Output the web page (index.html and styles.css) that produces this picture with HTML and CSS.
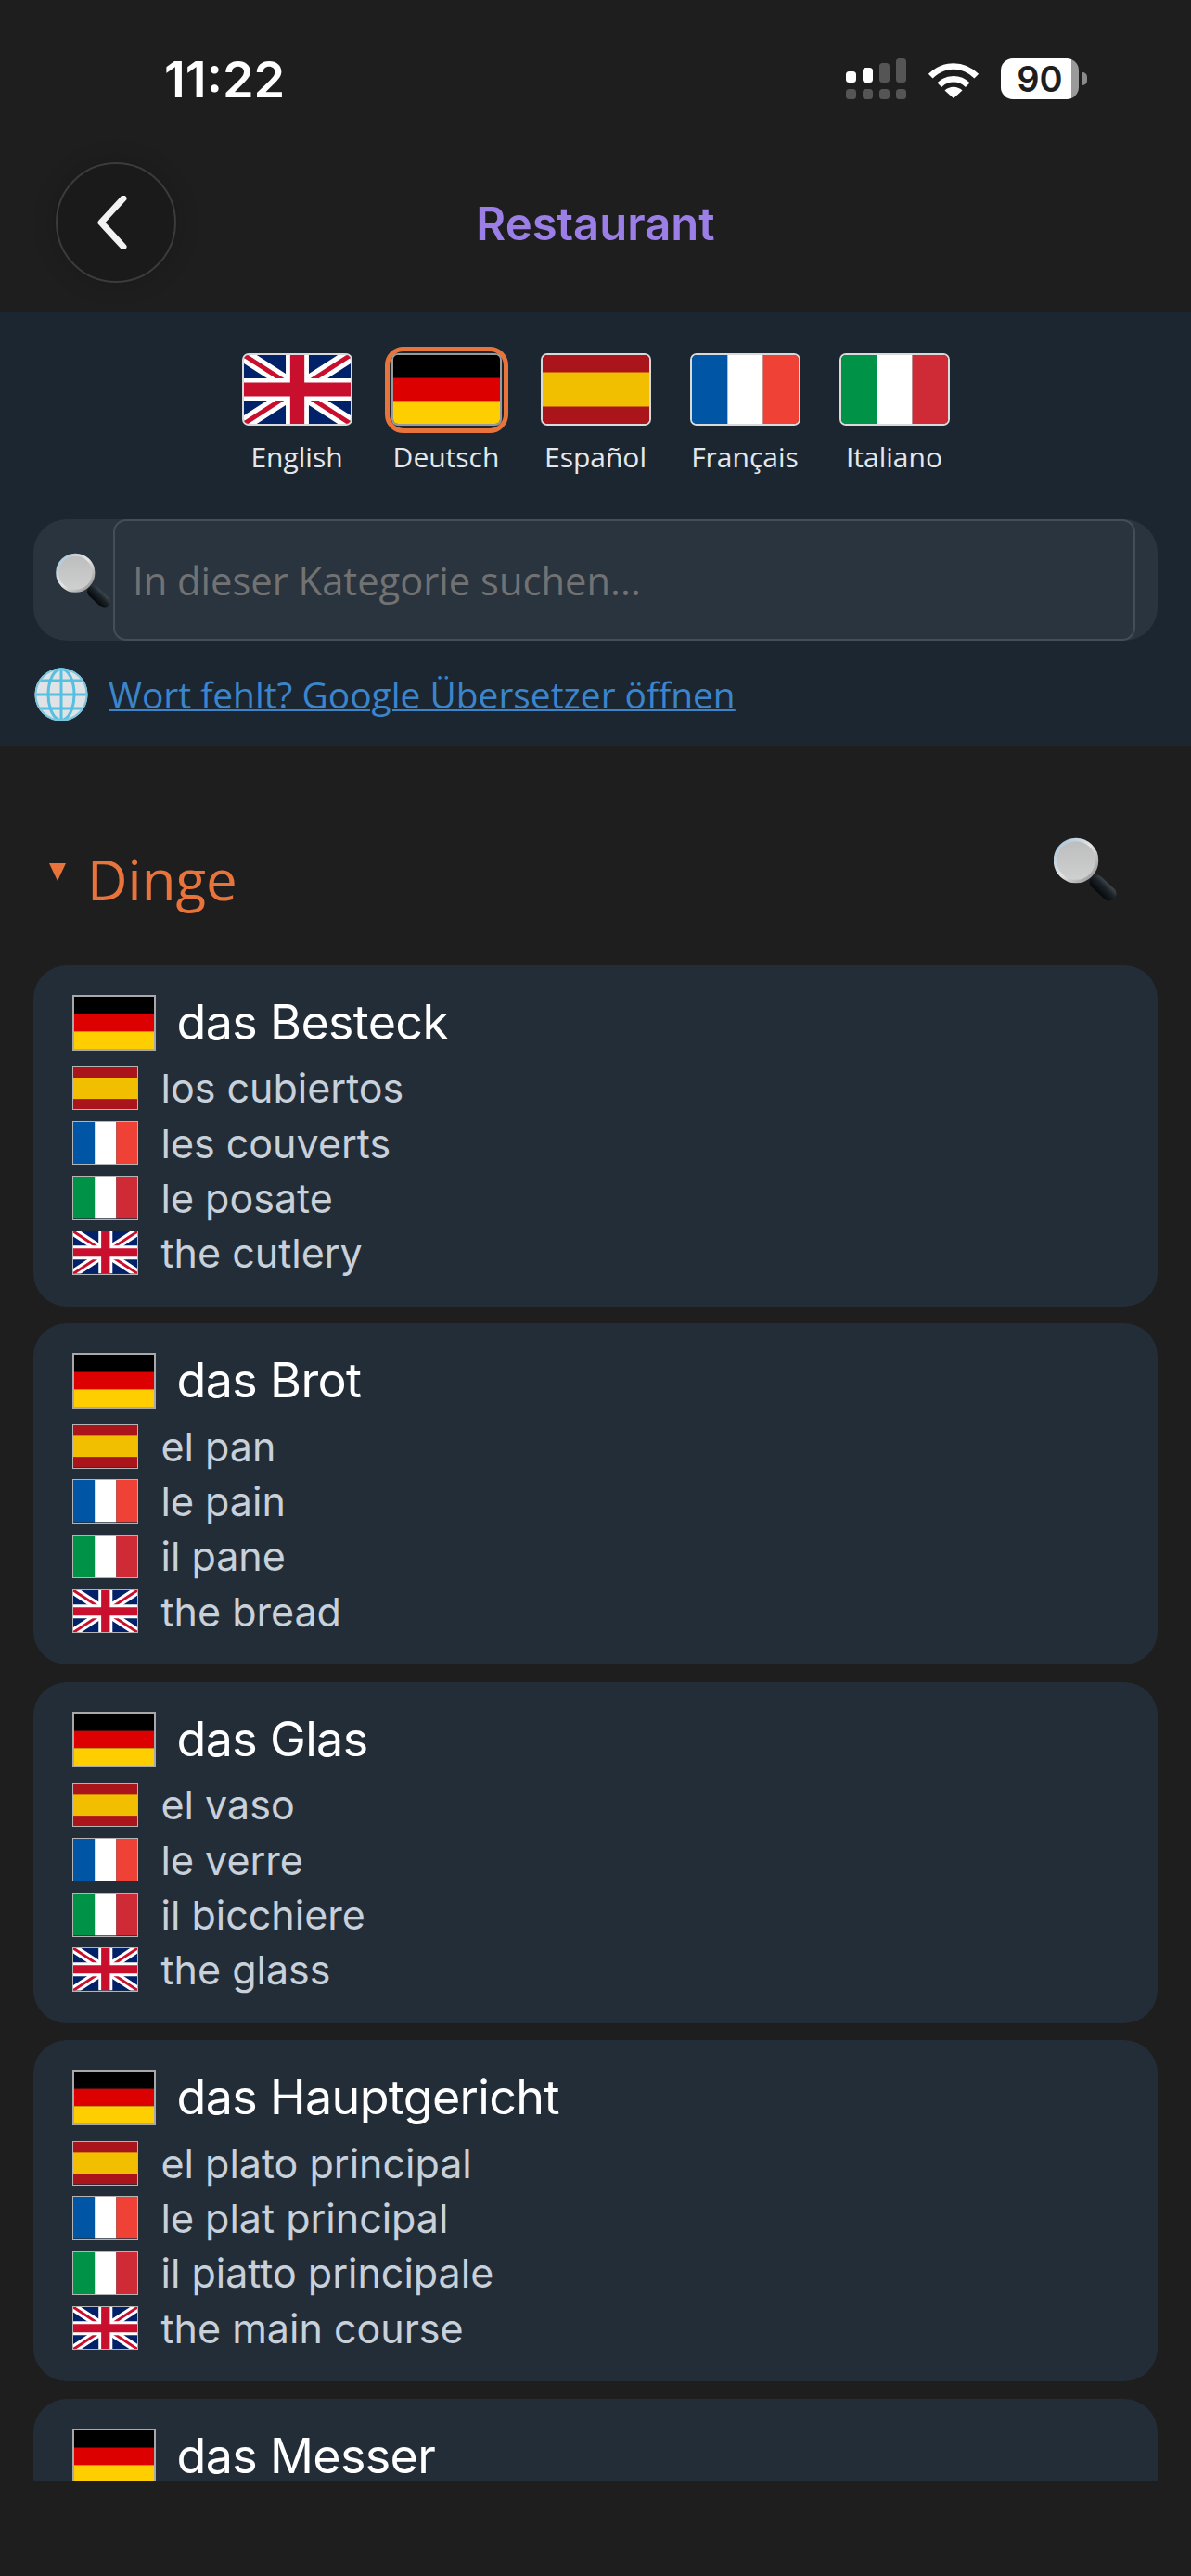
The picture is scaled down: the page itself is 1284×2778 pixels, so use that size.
FILE: index.html
```html
<!DOCTYPE html>
<html lang="de">
<head>
<meta charset="utf-8">
<title>Restaurant</title>
<link rel="stylesheet" href="styles.css">
</head>
<body>
<svg class="defs" width="0" height="0" aria-hidden="true">
  <defs>
    <linearGradient id="lens" x1="0" y1="0" x2="0" y2="1"><stop offset="0" stop-color="#bdbdbd"/><stop offset="1" stop-color="#cfd0d0"/></linearGradient>
    <linearGradient id="rim" x1="0" y1="0" x2="1" y2="1"><stop offset="0" stop-color="#9fc0d8"/><stop offset=".5" stop-color="#e6e6e6"/><stop offset="1" stop-color="#8b8b8b"/></linearGradient>
    <linearGradient id="handle" gradientUnits="userSpaceOnUse" x1="48" y1="60" x2="60" y2="48"><stop offset="0" stop-color="#06080a"/><stop offset=".55" stop-color="#1c2329"/><stop offset="1" stop-color="#4c545b"/></linearGradient>
    <symbol id="de" viewBox="0 0 90 60" preserveAspectRatio="none">
      <rect width="90" height="20" fill="#000"/><rect y="20" width="90" height="20" fill="#dd0000"/><rect y="40" width="90" height="20" fill="#ffce00"/>
    </symbol>
    <symbol id="es" viewBox="0 0 90 60" preserveAspectRatio="none">
      <rect width="90" height="60" fill="#aa151b"/><rect y="15" width="90" height="30" fill="#f1bf00"/>
    </symbol>
    <symbol id="fr" viewBox="0 0 90 60" preserveAspectRatio="none">
      <rect width="30" height="60" fill="#0055a4"/><rect x="30" width="30" height="60" fill="#fff"/><rect x="60" width="30" height="60" fill="#ef4135"/>
    </symbol>
    <symbol id="it" viewBox="0 0 90 60" preserveAspectRatio="none">
      <rect width="30" height="60" fill="#009246"/><rect x="30" width="30" height="60" fill="#fff"/><rect x="60" width="30" height="60" fill="#ce2b37"/>
    </symbol>
    <symbol id="uk" viewBox="0 0 60 40" preserveAspectRatio="none">
      <rect width="60" height="40" fill="#012169"/>
      <path d="M0 0L60 40M60 0L0 40" stroke="#fff" stroke-width="8"/>
      <path d="M0 0L60 40M60 0L0 40" stroke="#c8102e" stroke-width="2.6"/>
      <path d="M30 0V40M0 20H60" stroke="#fff" stroke-width="13"/>
      <path d="M30 0V40M0 20H60" stroke="#c8102e" stroke-width="8"/>
    </symbol>
    <symbol id="mag" viewBox="0 0 68 69">
      <path d="M46 48L60 61" stroke="url(#handle)" stroke-width="15" stroke-linecap="round"/>
      <circle cx="24" cy="25" r="22.5" fill="url(#lens)" stroke="url(#rim)" stroke-width="3.5"/>
    </symbol>
    <symbol id="globe" viewBox="0 0 58 58">
      <circle cx="29" cy="29" r="28.5" fill="#dfe3e6"/>
      <g fill="none" stroke="#57bfe0" stroke-width="3">
        <ellipse cx="29" cy="29" rx="14" ry="27.5"/>
        <path d="M29 1V57M2 29H56M6 14H52M6 44H52"/>
        <circle cx="29" cy="29" r="27.5" stroke="#7cc6de" stroke-width="2"/>
      </g>
    </symbol>
  </defs>
</svg>

<div class="app">
  <header class="top">
    <div class="status">
      <span class="time">11:22</span>
      <div class="status-icons">
        <svg class="signal" width="66" height="44" viewBox="0 0 66 44">
          <g fill="#fff"><rect x="0" y="14" width="11" height="12" rx="3.5"/><rect x="18" y="10" width="11" height="16" rx="3.5"/></g>
          <g fill="#555"><rect x="36" y="5" width="11" height="21" rx="3.5"/><rect x="54" y="0" width="11" height="26" rx="3.5"/>
          <rect x="0" y="33" width="11" height="11" rx="3.5"/><rect x="18" y="33" width="11" height="11" rx="3.5"/><rect x="36" y="33" width="11" height="11" rx="3.5"/><rect x="54" y="33" width="11" height="11" rx="3.5"/></g>
        </svg>
        <svg class="wifi" width="58" height="40" viewBox="0 0 58 42">
          <g fill="none" stroke="#fff" stroke-width="7">
            <path d="M3 17C18 2 40 2 55 17"/>
            <path d="M13 27C22 18 36 18 45 27"/>
          </g>
          <path d="M29 42L19 33C25 28 33 28 39 33Z" fill="#fff"/>
        </svg>
        <div class="battery"><span class="battery-level">90</span><span class="battery-nub"></span></div>
      </div>
    </div>
    <nav class="nav">
      <span class="nav-side"><button class="back" type="button">
        <svg width="40" height="58" viewBox="0 0 40 58"><path d="M31 3L7 29L31 55" fill="none" stroke="#f2f2f2" stroke-width="7" stroke-linecap="round" stroke-linejoin="round"/></svg>
      </button></span>
      <h1 class="title">Restaurant</h1>
      <span class="nav-side"></span>
    </nav>
  </header>

  <section class="panel">
    <div class="langs">
      <div class="lang"><span class="lang-frame"><svg class="lang-flag"><use href="#uk"/></svg></span><span class="lang-name">English</span></div>
      <div class="lang is-active"><span class="lang-frame"><svg class="lang-flag"><use href="#de"/></svg></span><span class="lang-name">Deutsch</span></div>
      <div class="lang"><span class="lang-frame"><svg class="lang-flag"><use href="#es"/></svg></span><span class="lang-name">Español</span></div>
      <div class="lang"><span class="lang-frame"><svg class="lang-flag"><use href="#fr"/></svg></span><span class="lang-name">Français</span></div>
      <div class="lang"><span class="lang-frame"><svg class="lang-flag"><use href="#it"/></svg></span><span class="lang-name">Italiano</span></div>
    </div>
    <div class="search">
      <svg class="search-icon"><use href="#mag"/></svg>
      <div class="search-input">In dieser Kategorie suchen...</div>
    </div>
    <div class="translate">
      <svg class="globe"><use href="#globe"/></svg>
      <a class="translate-link" href="#">Wort fehlt? Google Übersetzer öffnen</a>
    </div>
  </section>

  <main class="content">
    <div class="section-head">
      <span class="caret"></span>
      <h2 class="section-title">Dinge</h2>
      <svg class="section-search"><use href="#mag"/></svg>
    </div>
    <div class="cards">
      <article class="card">
        <div class="card-head"><svg class="flag-big"><use href="#de"/></svg><span class="word">das Besteck</span></div>
        <div class="row"><svg class="flag"><use href="#es"/></svg><span class="tr">los cubiertos</span></div>
        <div class="row"><svg class="flag"><use href="#fr"/></svg><span class="tr">les couverts</span></div>
        <div class="row"><svg class="flag"><use href="#it"/></svg><span class="tr">le posate</span></div>
        <div class="row"><svg class="flag"><use href="#uk"/></svg><span class="tr">the cutlery</span></div>
      </article>
      <article class="card">
        <div class="card-head"><svg class="flag-big"><use href="#de"/></svg><span class="word">das Brot</span></div>
        <div class="row"><svg class="flag"><use href="#es"/></svg><span class="tr">el pan</span></div>
        <div class="row"><svg class="flag"><use href="#fr"/></svg><span class="tr">le pain</span></div>
        <div class="row"><svg class="flag"><use href="#it"/></svg><span class="tr">il pane</span></div>
        <div class="row"><svg class="flag"><use href="#uk"/></svg><span class="tr">the bread</span></div>
      </article>
      <article class="card">
        <div class="card-head"><svg class="flag-big"><use href="#de"/></svg><span class="word">das Glas</span></div>
        <div class="row"><svg class="flag"><use href="#es"/></svg><span class="tr">el vaso</span></div>
        <div class="row"><svg class="flag"><use href="#fr"/></svg><span class="tr">le verre</span></div>
        <div class="row"><svg class="flag"><use href="#it"/></svg><span class="tr">il bicchiere</span></div>
        <div class="row"><svg class="flag"><use href="#uk"/></svg><span class="tr">the glass</span></div>
      </article>
      <article class="card">
        <div class="card-head"><svg class="flag-big"><use href="#de"/></svg><span class="word">das Hauptgericht</span></div>
        <div class="row"><svg class="flag"><use href="#es"/></svg><span class="tr">el plato principal</span></div>
        <div class="row"><svg class="flag"><use href="#fr"/></svg><span class="tr">le plat principal</span></div>
        <div class="row"><svg class="flag"><use href="#it"/></svg><span class="tr">il piatto principale</span></div>
        <div class="row"><svg class="flag"><use href="#uk"/></svg><span class="tr">the main course</span></div>
      </article>
      <article class="card">
        <div class="card-head"><svg class="flag-big"><use href="#de"/></svg><span class="word">das Messer</span></div>
      </article>
    </div>
  </main>
  <div class="bottom"></div>
</div>
</body>
</html>
```

FILE: styles.css
```css
* { box-sizing: border-box; }
html, body { margin: 0; padding: 0; }
body { background: #1e1e1e; overflow: hidden; font-family: "Inter", "Liberation Sans", sans-serif; }
.defs { display: block; height: 0; }
.app { width: 1284px; height: 2778px; display: flex; flex-direction: column; background: #1e1e1e; overflow: hidden; }

/* top */
.top { height: 337px; flex: none; border-bottom: 1px solid #2f3d48; }
.status { height: 175px; padding: 62px 112px 0 177px; display: flex; justify-content: space-between; align-items: flex-start; }
.time { color: #fff; font-size: 54px; line-height: 48px; font-weight: 600; }
.status-icons { display: flex; align-items: flex-start; }
.signal { display: block; margin-top: 1px; }
.wifi { display: block; margin: 4px 0 0 21px; }
.battery { margin: 1px 0 0 22px; display: flex; align-items: center; }
.battery-level { width: 84px; height: 44px; border-radius: 13px; background: linear-gradient(90deg, #fff 0, #fff 90.5%, #9a9a9a 90.5%); color: #1e1e1e; font-size: 38px; line-height: 44px; font-weight: 600; text-align: center; }
.battery-nub { width: 5px; height: 14px; margin-left: 4px; background: #8a8a8a; border-radius: 0 5px 5px 0; }
.nav { display: grid; grid-template-columns: 1fr auto 1fr; height: 161px; }
.nav-side { padding-left: 60px; }
.back { width: 130px; height: 130px; border-radius: 50%; border: 2px solid #3b3b3b; background: #1a1a1a; box-shadow: 0 0 26px rgba(0,0,0,.18); display: flex; align-items: center; justify-content: center; padding: 0 6px 0 0; }
.back svg { display: block; }
.title { margin: 0; color: #9b7fe6; font-size: 49px; line-height: 133px; font-weight: 600; }

/* panel */
.panel { height: 468px; flex: none; background: #1c2630; padding-top: 37px; }
.langs { display: grid; grid-template-columns: repeat(5, 161px); justify-content: center; justify-items: center; }
.lang { display: flex; flex-direction: column; align-items: center; }
.lang-frame { display: block; width: 133px; height: 93px; padding: 2px; border: 5px solid transparent; border-radius: 20px; }
.is-active .lang-frame { border-color: #e8743b; }
.lang-flag { display: block; width: 119px; height: 78px; margin: 0 auto; border: 2px solid #d9d9d9; border-radius: 7px; }
.is-active .lang-flag { border-color: #9a9a9a; }
.lang-name { color: #e4e8ec; font-family: "Open Sans", sans-serif; font-size: 30px; line-height: 38px; margin-top: 7px; }
.search { margin: 48px 36px 0; height: 131px; border-radius: 36px; background: #2a343f; padding-right: 24px; display: flex; align-items: center; }
.search-icon { width: 60px; height: 60px; margin: 0 2px 0 24px; flex: none; }
.search-input { flex: 1; height: 131px; border: 2px solid #434e59; border-radius: 14px; color: #727272; font-family: "Open Sans", sans-serif; font-size: 41.7px; line-height: 127px; padding-left: 19px; }
.translate { display: flex; align-items: center; margin: 29px 0 0 37px; }
.globe { width: 58px; height: 58px; flex: none; }
.translate-link { margin-left: 22px; color: #3a85cc; font-family: "Open Sans", sans-serif; font-size: 38.9px; line-height: 58px; text-decoration: underline; text-decoration-thickness: 2px; }

/* content */
.content { flex: 1; min-height: 0; overflow: hidden; }
.section-head { height: 235.5px; padding: 99px 80px 0 53px; display: flex; align-items: flex-start; }
.caret { width: 0; height: 0; border-left: 9px solid transparent; border-right: 9px solid transparent; border-top: 19px solid #e8743b; margin: 27px 23px 0 0; flex: none; }
.section-title { margin: 4px 0 0; flex: 1; color: #e8743b; font-family: "Open Sans", sans-serif; font-size: 60px; line-height: 80px; font-weight: 400; }
.section-search { width: 68px; height: 69px; margin-top: -1px; flex: none; }
.cards { display: flex; flex-direction: column; gap: 18.5px; padding: 0 36px; }
.card { background: #232d38; border-radius: 36px; padding: 32px 41.5px; height: 368px; flex: none; }
.card-head { display: flex; align-items: center; height: 60px; margin-bottom: 17px; }
.flag-big { width: 90px; height: 60px; flex: none; border: 2px solid #a8a8a8; }
.word { color: #fff; font-size: 52px; line-height: 52px; margin-left: 23px; letter-spacing: -0.65px; }
.row { display: flex; align-items: center; height: 47.5px; margin-bottom: 11.8px; }
.flag { width: 71.5px; height: 47.5px; flex: none; border: 1.5px solid #b4b4b4; }
.tr { color: #c8d0da; font-size: 43px; line-height: 47px; margin-left: 24.5px; padding-top: 1px; }
.bottom { height: 102px; flex: none; background: #1e1e1e; }
```
